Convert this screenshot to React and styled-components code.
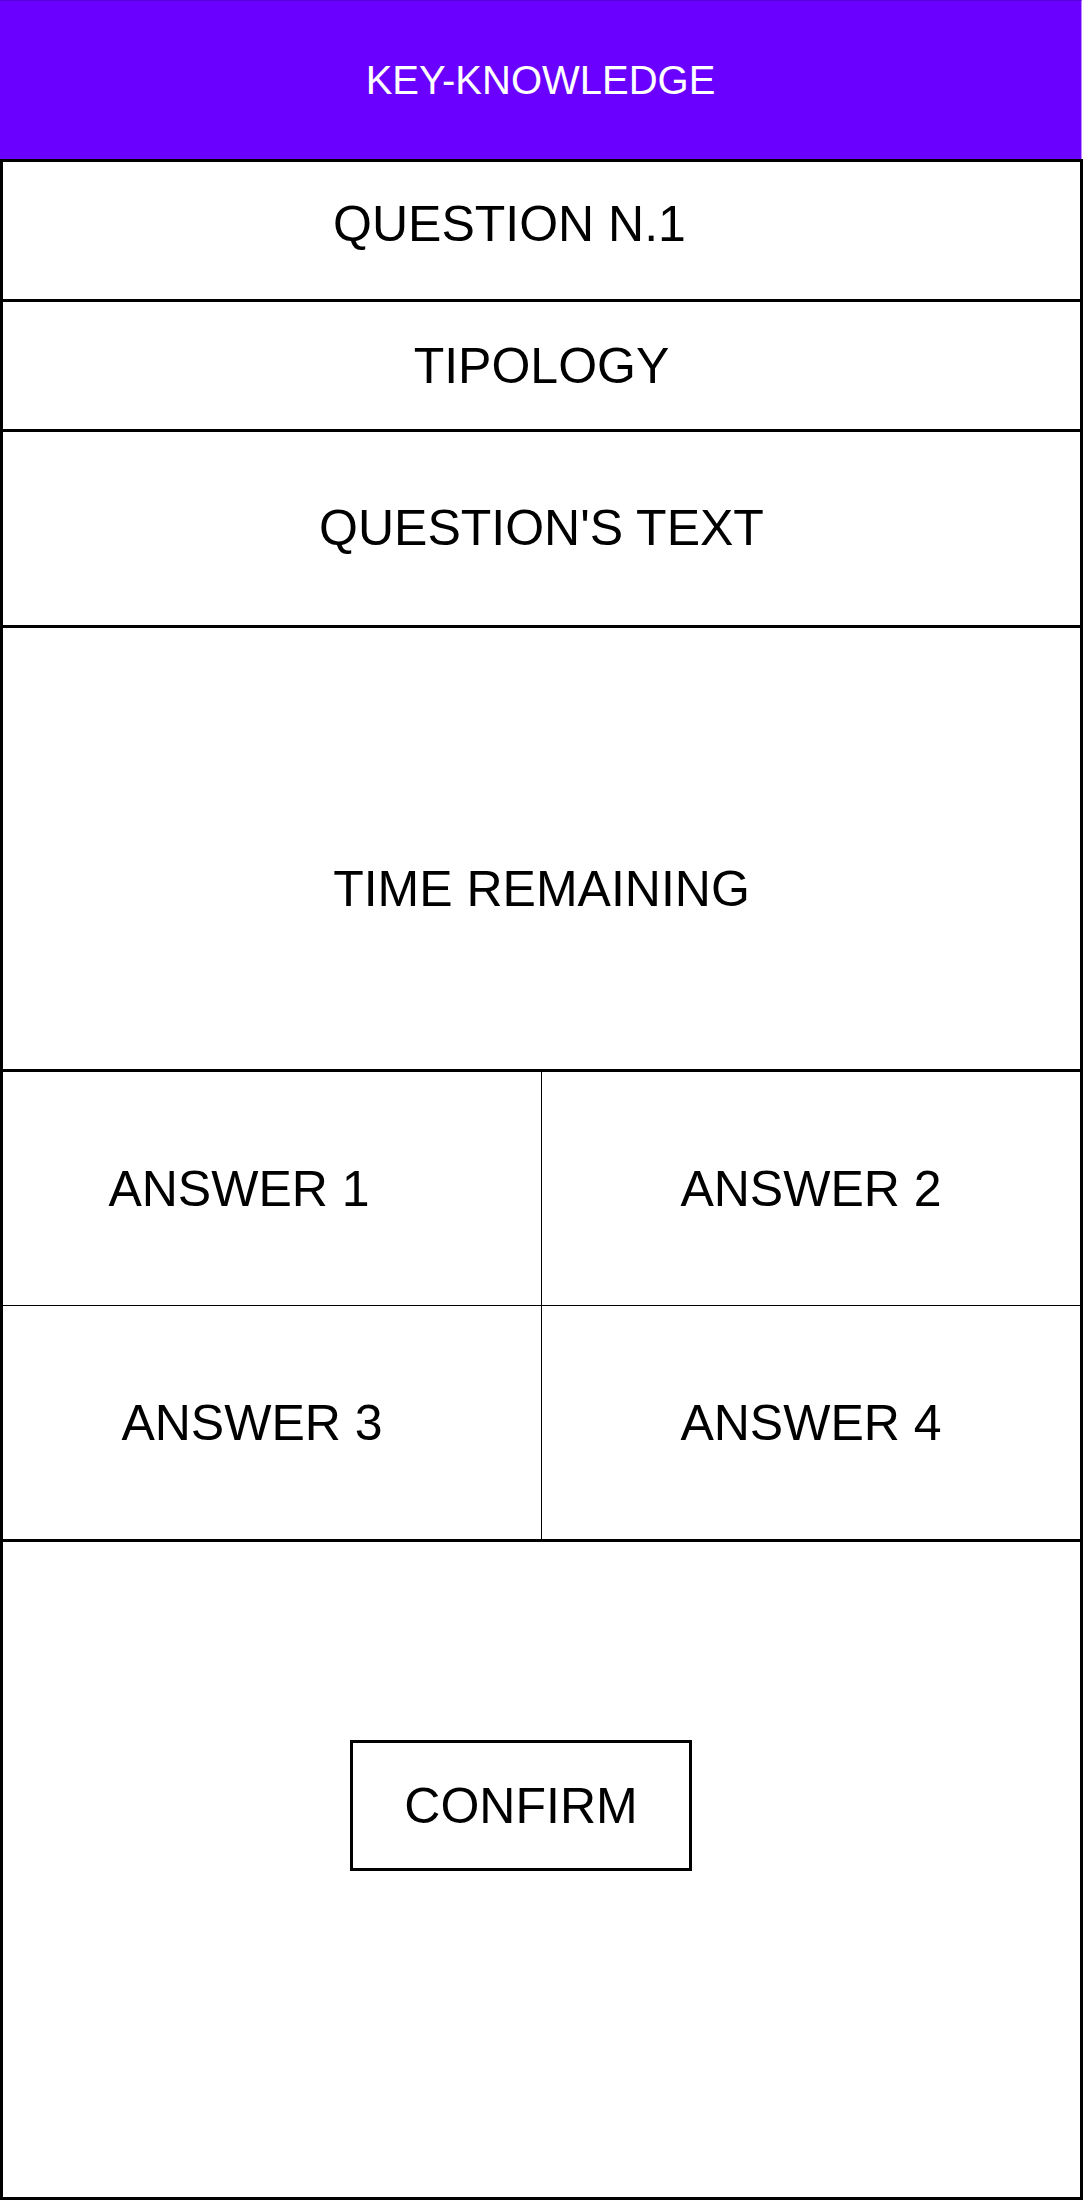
import React from "react";
import styled, { createGlobalStyle } from "styled-components";

const Global = createGlobalStyle`
  html, body {
    margin: 0;
    padding: 0;
    background: #fff;
  }
  body {
    font-family: "Liberation Sans", Arial, sans-serif;
    color: #000;
  }
`;

const Page = styled.div`
  width: 1083px;
`;

const Header = styled.header`
  height: 158px;
  width: 1081px;
  background: #6a00ff;
  border-top: 1px solid #5a00dc;
  border-right: 1px solid #b98bff;
  display: flex;
  align-items: center;
  justify-content: center;
  color: #fff;
  font-size: 40px;
`;

const Frame = styled.div`
  border: 3px solid #000;
  display: flex;
  flex-direction: column;
`;

const Section = styled.section`
  height: ${p => p.h}px;
  border-bottom: ${p => (p.last ? "none" : "3px solid #000")};
  display: flex;
  align-items: center;
  justify-content: center;
  font-size: 50px;
  padding: ${p => p.pad || "0"};
  box-sizing: border-box;
`;

const Answers = styled.div`
  display: grid;
  grid-template-columns: 1fr 1fr;
  grid-template-rows: 233px 233px;
  gap: 1px;
  background: #000;
  border-bottom: 3px solid #000;
`;

const Answer = styled.div`
  background: #fff;
  display: flex;
  align-items: center;
  justify-content: center;
  font-size: 50px;
  padding-right: ${p => p.shift || 0}px;
`;

const ConfirmButton = styled.button`
  width: 342px;
  height: 131px;
  box-sizing: border-box;
  border: 3px solid #000;
  background: #fff;
  font-family: "Liberation Sans", Arial, sans-serif;
  font-size: 50px;
  color: #000;
  padding: 0;
`;

export default function App() {
  return (
    <Page>
      <Global />
      <Header>KEY-KNOWLEDGE</Header>
      <Frame>
        <Section h={140} pad="0 64px 14px 0">QUESTION N.1</Section>
        <Section h={130}>TIPOLOGY</Section>
        <Section h={196} pad="0 0 2px 0">QUESTION'S TEXT</Section>
        <Section h={444} pad="80px 0 0 0">TIME REMAINING</Section>
        <Answers>
          <Answer shift={66}>ANSWER 1</Answer>
          <Answer>ANSWER 2</Answer>
          <Answer shift={40}>ANSWER 3</Answer>
          <Answer>ANSWER 4</Answer>
        </Answers>
        <Section h={655} last pad="0 41px 128px 0">
          <ConfirmButton>CONFIRM</ConfirmButton>
        </Section>
      </Frame>
    </Page>
  );
}
